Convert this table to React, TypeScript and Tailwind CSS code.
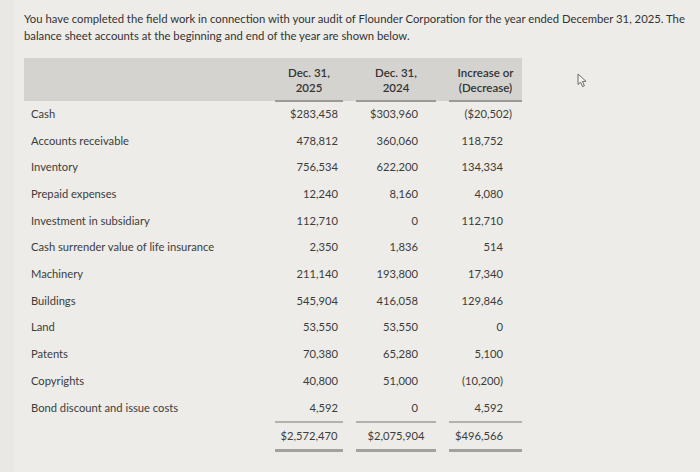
import React from "react";

type Row = {
  label: string;
  cur: string;
  prev: string;
  diff: string;
};

const rows: Row[] = [
  { label: "Cash", cur: "$283,458", prev: "$303,960", diff: "($20,502)" },
  { label: "Accounts receivable", cur: "478,812", prev: "360,060", diff: "118,752" },
  { label: "Inventory", cur: "756,534", prev: "622,200", diff: "134,334" },
  { label: "Prepaid expenses", cur: "12,240", prev: "8,160", diff: "4,080" },
  { label: "Investment in subsidiary", cur: "112,710", prev: "0", diff: "112,710" },
  { label: "Cash surrender value of life insurance", cur: "2,350", prev: "1,836", diff: "514" },
  { label: "Machinery", cur: "211,140", prev: "193,800", diff: "17,340" },
  { label: "Buildings", cur: "545,904", prev: "416,058", diff: "129,846" },
  { label: "Land", cur: "53,550", prev: "53,550", diff: "0" },
  { label: "Patents", cur: "70,380", prev: "65,280", diff: "5,100" },
  { label: "Copyrights", cur: "40,800", prev: "51,000", diff: "(10,200)" },
  { label: "Bond discount and issue costs", cur: "4,592", prev: "0", diff: "4,592" },
];

const grid = "grid grid-cols-[238px_68px_80px_73px] gap-x-[13px]";

function Pointer() {
  return (
    <svg
      className="absolute left-[577px] top-[73px]"
      width="12"
      height="15"
      viewBox="0 0 12 15"
      fill="none"
    >
      <path
        d="M1 1 L1 11.5 L3.6 9.2 L5.6 13.6 L7.4 12.8 L5.5 8.5 L9 8.3 Z"
        fill="#f4f3ef"
        stroke="#6b6b6b"
        strokeWidth="1"
        strokeLinejoin="round"
      />
    </svg>
  );
}

export default function App() {
  return (
    <div className="relative h-[472px] w-[700px] overflow-hidden bg-[#edece8] font-['Lato','Liberation_Sans',sans-serif] text-[#3c3c3c]">
      <div className="absolute inset-y-0 left-0 w-[14px] bg-[#e9e8e4]" />
      <Pointer />

      <div className="relative pl-[24px] pt-[10px]">
        <p className="w-[664px] text-[11.3px] leading-[17px] text-[#333]">
          You have completed the field work in connection with your audit of Flounder Corporation for the year ended
          December 31, 2025. The balance sheet accounts at the beginning and end of the year are shown below.
        </p>

        <div className="mt-[14px] w-[498px]">
          {/* Header */}
          <div className={`${grid} h-[43px] bg-[#d5d3cf] text-[11.5px] font-semibold leading-[15px] text-[#333]`}>
            <div />
            <div className="flex items-center justify-center text-center">
              Dec. 31,
              <br />
              2025
            </div>
            <div className="flex items-center justify-center text-center">
              Dec. 31,
              <br />
              2024
            </div>
            <div className="flex items-center justify-center text-center">
              Increase or
              <br />
              (Decrease)
            </div>
          </div>
          <div className={`${grid} -mt-px h-[2px]`}>
            <div />
            <div className="bg-[#9c9a96]" />
            <div className="bg-[#9c9a96]" />
            <div className="bg-[#9c9a96]" />
          </div>

          {/* Rows */}
          <div className="-mt-px text-[11.2px]">
            {rows.map((r, i) => (
              <div key={r.label} className={`${grid} h-[26.7px] items-center`}>
                <div className="pl-[7px]">{r.label}</div>
                <div className="pr-[5px] text-right">{r.cur}</div>
                <div className="pr-[18px] text-right">{r.prev}</div>
                <div className={i === 0 ? "pr-[10px] text-right" : "pr-[19px] text-right"}>{r.diff}</div>
              </div>
            ))}
          </div>

          {/* Totals */}
          <div className={`${grid} h-[2px]`}>
            <div />
            <div className="bg-[#b3b1ad]" />
            <div className="bg-[#b3b1ad]" />
            <div className="bg-[#b3b1ad]" />
          </div>
          <div className={`${grid} h-[26px] items-center text-[11.2px]`}>
            <div />
            <div className="text-center">$2,572,470</div>
            <div className="text-center">$2,075,904</div>
            <div className="pr-[19px] text-right">$496,566</div>
          </div>
          <div className={`${grid} h-[3px]`}>
            <div />
            <div className="bg-[#a3a19d]" />
            <div className="bg-[#a3a19d]" />
            <div className="bg-[#a3a19d]" />
          </div>
        </div>
      </div>
    </div>
  );
}
